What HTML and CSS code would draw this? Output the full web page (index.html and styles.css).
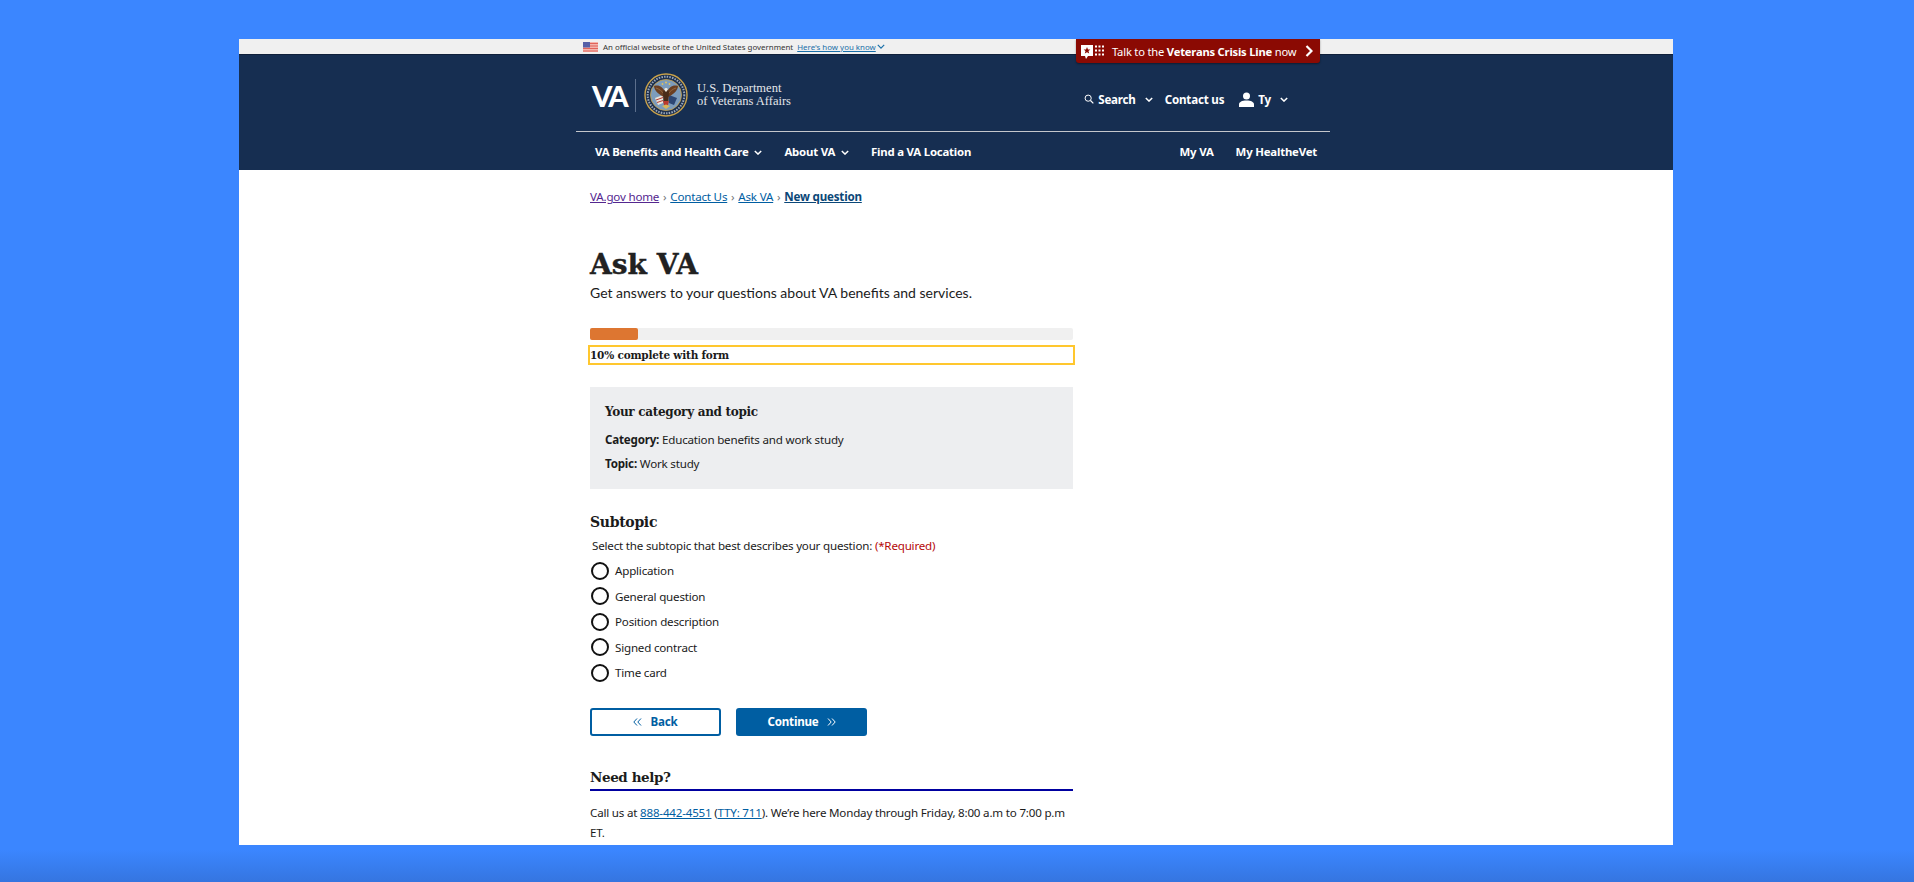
FILE: index.html
```html
<!DOCTYPE html>
<html lang="en">
<head>
    <meta charset="UTF-8">
    <meta name="viewport" content="width=device-width, initial-scale=1.0">
    <title>Ask VA</title>
    <link rel="stylesheet" href="styles.css">
</head>
<body>
    <div class="frame">
        <div class="official-bar">
            <div class="official-inner">
                <svg class="flag" viewBox="0 0 15 10" width="15" height="10">
                    <rect width="15" height="10" fill="#f4b5ad"/>
                    <path d="M0 1.500h15M0 4h15M0 6.500h15M0 9h15" stroke="#e0655a" stroke-width="1"/>
                    <rect width="7" height="5.500" fill="#5560a8"/>
                </svg>
                <span class="official-text">An official website of the United States government</span>
                <a href="#" class="official-link">Here's how you know</a>
                <svg class="official-caret" viewBox="0 0 10 6" width="8" height="5"><path d="M1 1l4 4 4-4" fill="none" stroke="#1a6fa8" stroke-width="1.500"/></svg>
            </div>
        </div>

        <a href="#" class="crisis-btn">
            <svg class="crisis-icon" viewBox="0 0 24 15" width="24" height="15">
                <path d="M1 1h12v11H8l-2 3-1-3H1z" fill="#fff"/>
                <path d="M7 3l1 2.500h2.400L8.500 7l.7 2.600L7 8.200 4.800 9.600 5.500 7 3.600 5.500H6z" fill="#8b0a03"/>
                <path d="M15 1.500h2v2h-2zM18.500 1.500h2v2h-2zM22 1.500h2v2h-2zM15 5.500h2v2h-2zM18.500 5.500h2v2h-2zM22 5.500h2v2h-2zM15 9.500h2v2h-2zM18.500 9.500h2v2h-2zM22 9.500h2v2h-2z" fill="#fff"/>
            </svg>
            <span class="crisis-text">Talk to the <b>Veterans Crisis Line</b> now</span>
            <svg class="crisis-arrow" viewBox="0 0 8 12" width="8" height="12"><path d="M1.500 1l5 5-5 5" fill="none" stroke="#fff" stroke-width="2.200"/></svg>
        </a>

        <header class="site-header">
            <div class="header-inner">
                <div class="logo-row">
                    <div class="logo">
                        <span class="logo-va">VA</span>
                        <span class="logo-divider"></span>
                        <svg class="seal" viewBox="0 0 44 44" width="44" height="44">
                            <circle cx="22" cy="22" r="21" fill="#1d2f4d" stroke="#c9a24a" stroke-width="1.400"/>
                            <circle cx="22" cy="22" r="15.500" fill="#7c9cbc" stroke="#c9a24a" stroke-width="0.800"/>
                            <circle cx="22" cy="22" r="18.300" fill="none" stroke="#9aa8ba" stroke-width="2" stroke-dasharray="1.500 1.200"/>
                            <path d="M11 25l8-3v8l-5 2z" fill="#e9e4da"/>
                            <path d="M12 27l7-2.500M13 29.500l6-2" stroke="#b8392f" stroke-width="1"/>
                            <path d="M33 25l-8-3v8l5 2z" fill="#2d4774"/>
                            <path d="M20 24C16 22 10 18 10 13c5-1.500 9 1 11 6zM24 24c4-2 10-6 10-11-5-1.500-9 1-11 6z" fill="#6b3f22"/>
                            <path d="M12 15c3 1 6 3 8 6M32 15c-3 1-6 3-8 6" stroke="#94683f" stroke-width="1" fill="none"/>
                            <path d="M19 19c1-3 5-3 6 0l-.5 9h-5z" fill="#4a2c18"/>
                            <path d="M20.300 16a2 2 0 013.500 0l-1 2.500h-1.600z" fill="#f0ebe0"/>
                            <path d="M19 28h6l-1.500 6h-3z" fill="#b8392f"/>
                            <path d="M18 33l4-1.500 4 1.500-4 3z" fill="#d9b659"/>
                            <circle cx="22" cy="9.500" r="1" fill="#e2c35f"/><circle cx="18.500" cy="11" r=".9" fill="#e2c35f"/><circle cx="25.500" cy="11" r=".9" fill="#e2c35f"/>
                        </svg>
                        <span class="logo-dept">U.S. Department<br>of Veterans Affairs</span>
                    </div>
                    <nav class="utility-nav">
                        <a href="#" class="util-link util-search">
                            <svg viewBox="0 0 12 12" width="10" height="10"><circle cx="5" cy="5" r="3.700" fill="none" stroke="#fff" stroke-width="1.200"/><path d="M7.800 7.800l3.400 3.400" stroke="#fff" stroke-width="1.400"/></svg>
                            Search
                            <svg class="caret caret-search" viewBox="0 0 10 6" width="8" height="5"><path d="M1 1l4 4 4-4" fill="none" stroke="#fff" stroke-width="1.800"/></svg>
                        </a>
                        <a href="#" class="util-link">Contact us</a>
                        <a href="#" class="util-link util-user">
                            <svg viewBox="0 0 15 15" width="15" height="15"><circle cx="7.500" cy="4" r="3.500" fill="#fff"/><path d="M0 15v-2.500C0 10 3 8.500 7.500 8.500S15 10 15 12.500V15z" fill="#fff"/></svg>
                            Ty
                            <svg class="caret caret-user" viewBox="0 0 10 6" width="8" height="5"><path d="M1 1l4 4 4-4" fill="none" stroke="#fff" stroke-width="1.800"/></svg>
                        </a>
                    </nav>
                </div>
                <nav class="main-nav">
                    <div class="main-nav-left">
                        <a href="#" class="nav-link">VA Benefits and Health Care <svg viewBox="0 0 10 6" width="8" height="5"><path d="M1 1l4 4 4-4" fill="none" stroke="#fff" stroke-width="1.800"/></svg></a>
                        <a href="#" class="nav-link">About VA <svg viewBox="0 0 10 6" width="8" height="5"><path d="M1 1l4 4 4-4" fill="none" stroke="#fff" stroke-width="1.800"/></svg></a>
                        <a href="#" class="nav-link">Find a VA Location</a>
                    </div>
                    <div class="main-nav-right">
                        <a href="#" class="nav-link">My VA</a>
                        <a href="#" class="nav-link">My HealtheVet</a>
                    </div>
                </nav>
            </div>
        </header>

        <main class="content">
            <div class="breadcrumbs">
                <a href="#" class="crumb-visited">VA.gov home</a>
                <span class="crumb-sep">›</span>
                <a href="#">Contact Us</a>
                <span class="crumb-sep">›</span>
                <a href="#">Ask VA</a>
                <span class="crumb-sep">›</span>
                <a href="#" class="crumb-current">New question</a>
            </div>

            <h1>Ask VA</h1>
            <p class="intro">Get answers to your questions about VA benefits and services.</p>

            <div class="progress-track"><div class="progress-fill" style="width: 10%"></div></div>
            <div class="progress-label">10% complete with form</div>

            <section class="topic-box">
                <h3>Your category and topic</h3>
                <p><b>Category:</b> Education benefits and work study</p>
                <p><b>Topic:</b> Work study</p>
            </section>

            <h2 class="subtopic-title">Subtopic</h2>
            <div class="subtopic-hint">Select the subtopic that best describes your question: <span class="required">(*Required)</span></div>

            <div class="radio-list">
                <label class="radio-row"><span class="radio"></span>Application</label>
                <label class="radio-row"><span class="radio"></span>General question</label>
                <label class="radio-row"><span class="radio"></span>Position description</label>
                <label class="radio-row"><span class="radio"></span>Signed contract</label>
                <label class="radio-row"><span class="radio"></span>Time card</label>
            </div>

            <div class="form-buttons">
                <button class="btn btn-back">
                    <svg viewBox="0 0 9 8" width="9" height="8"><path d="M4 .5L.8 4 4 7.500M8 .5L4.800 4 8 7.500" fill="none" stroke="#005ea2" stroke-width="1"/></svg>
                    Back
                </button>
                <button class="btn btn-continue">
                    Continue
                    <svg viewBox="0 0 9 8" width="9" height="8"><path d="M1 .5L4.200 4 1 7.500M5 .5L8.200 4 5 7.500" fill="none" stroke="#fff" stroke-width="1"/></svg>
                </button>
            </div>

            <h2 class="help-title">Need help?</h2>
            <p class="help-text">Call us at <a href="#">888-442-4551</a> (<a href="#">TTY: 711</a>). We’re here Monday through Friday, 8:00 a.m to 7:00 p.m ET.</p>
        </main>
    </div>
</body>
</html>
```

FILE: styles.css
```css
html, body {
    height: 100%;
    margin: 0;
}

body {
    background: linear-gradient(#3b86ff 0, #3b86ff 850px, #3575e0 882px);
    font-family: "Noto Sans", sans-serif;
    color: #1b1b1b;
    overflow: hidden;
}

a {
    color: #005ea2;
}

.frame {
    position: relative;
    width: 1434px;
    height: 806px;
    margin: 39px 0 0 239px;
    background-color: #ffffff;
    overflow: hidden;
}

.official-bar {
    height: 15px;
    background-color: #f0f0f0;
}

.official-inner {
    display: flex;
    align-items: center;
    height: 15px;
    padding-left: 344px;
    font-size: 7.900px;
}

.flag {
    margin-right: 5px;
}

.official-text {
    color: #333;
    margin-right: 4px;
}

.official-link {
    color: #1a6fa8;
    margin-right: 1px;
}

.crisis-btn {
    position: absolute;
    top: 0;
    left: 837px;
    width: 244px;
    height: 24px;
    box-sizing: border-box;
    padding: 0 7px 0 4px;
    display: flex;
    align-items: center;
    background-color: #8b0a03;
    border-radius: 0 0 3px 3px;
    box-shadow: 0 1px 2px rgba(0, 0, 0, 0.4);
    color: #fff;
    text-decoration: none;
    font-size: 11.200px;
    letter-spacing: -0.200px;
    white-space: nowrap;
}

.crisis-text {
    margin-left: 8px;
    flex: 1;
}

.site-header {
    height: 116px;
    background-color: #162e51;
    border-top: 1px solid #10203a;
    box-sizing: border-box;
}

.header-inner {
    width: 754px;
    margin-left: 337px;
}

.logo-row {
    display: flex;
    justify-content: space-between;
    align-items: center;
    height: 76px;
    border-bottom: 1.500px solid #c4c7cc;
    padding: 0 42px 0 15px;
}

.logo {
    display: flex;
    align-items: center;
    margin-top: 4px;
}

.logo-va {
    font-family: "Lato", sans-serif;
    font-weight: 900;
    font-size: 29px;
    letter-spacing: -2.500px;
    color: #fff;
    width: 36px;
    padding-left: 1px;
    margin-right: -1px;
}

.logo-divider {
    width: 1px;
    height: 33px;
    background-color: #5c6f8c;
    margin: 0 8px 0 8px;
}

.logo-dept {
    font-family: "Liberation Serif", serif;
    font-size: 12.500px;
    line-height: 13px;
    color: #e4e6ea;
    margin-left: 9px;
}

.utility-nav {
    display: flex;
    align-items: center;
    margin-top: 12px;
    font-size: 11.600px;
    font-weight: 700;
    letter-spacing: -0.200px;
}

.util-link {
    display: flex;
    align-items: center;
    color: #fff;
    text-decoration: none;
}

.util-search svg:first-child {
    margin-right: 4px;
}

.caret-search {
    margin: 0 12px 0 9px;
}

.util-user {
    margin-left: 15px;
}

.util-user svg:first-child {
    margin-right: 4px;
}

.caret-user {
    margin: 0 0 0 9px;
}

.main-nav {
    display: flex;
    justify-content: space-between;
    align-items: center;
    height: 38px;
    padding: 0 13px 0 19px;
    box-sizing: border-box;
    font-size: 11.400px;
    font-weight: 700;
    letter-spacing: -0.200px;
}

.main-nav-left, .main-nav-right {
    display: flex;
    gap: 22px;
}

.nav-link {
    color: #fff;
    text-decoration: none;
}

.nav-link svg {
    margin-left: 3px;
    vertical-align: 1px;
}

.content {
    width: 483px;
    margin-left: 351px;
    font-size: 11.600px;
    letter-spacing: -0.200px;
}

.breadcrumbs {
    margin-top: 19px;
    height: 16px;
    line-height: 16px;
}

.crumb-visited {
    color: #54278f;
}

.crumb-sep {
    color: #71767a;
    margin: 0 1px;
}

.crumb-current {
    font-weight: 700;
    color: #0b4778;
}

h1 {
    font-family: "DejaVu Serif", serif;
    font-weight: 700;
    font-size: 28px;
    line-height: 34px;
    color: #212121;
    margin: 43px 0 0;
    letter-spacing: 0;
    -webkit-text-stroke: 0.400px #212121;
}

.intro {
    font-family: "Lato", sans-serif;
    font-size: 14px;
    line-height: 20px;
    margin: 1px 0 0;
    letter-spacing: 0;
}

.progress-track {
    height: 12px;
    margin-top: 25px;
    background-color: #f0f0f0;
    border-radius: 2px;
}

.progress-fill {
    height: 100%;
    background-color: #dd7631;
    border-radius: 2px;
}

.progress-label {
    font-family: "DejaVu Serif", serif;
    font-weight: 700;
    font-size: 10.500px;
    letter-spacing: -0.200px;
    height: 16px;
    line-height: 16px;
    margin: 5px -2px 0 -2px;
    border: 2px solid #ffc72e;
}

.topic-box {
    margin-top: 22px;
    height: 102px;
    box-sizing: border-box;
    padding: 15px 15px;
    background-color: #edeef0;
}

.topic-box h3 {
    font-family: "DejaVu Serif", serif;
    font-size: 12px;
    letter-spacing: -0.300px;
    line-height: 20px;
    margin: 0 0 9px;
}

.topic-box p {
    margin: 0 0 6px;
    line-height: 18px;
}

.subtopic-title {
    font-family: "DejaVu Serif", serif;
    font-size: 14px;
    letter-spacing: -0.300px;
    line-height: 20px;
    margin: 23px 0 0;
}

.subtopic-hint {
    margin: 5px 0 0 2px;
    line-height: 18px;
}

.required {
    color: #b50909;
}

.radio-list {
    display: flex;
    flex-direction: column;
    margin-top: 3px;
}

.radio-row {
    display: flex;
    align-items: center;
    height: 25.500px;
    gap: 6px;
}

.radio {
    width: 14px;
    height: 14px;
    border: 2px solid #111;
    border-radius: 50%;
    margin-left: 1px;
    background-color: #fff;
}

.form-buttons {
    display: flex;
    gap: 15px;
    margin-top: 22px;
}

.btn {
    display: flex;
    align-items: center;
    justify-content: center;
    gap: 8px;
    width: 131px;
    height: 28px;
    padding: 0;
    border-radius: 3px;
    font-family: "Noto Sans", sans-serif;
    font-size: 11.600px;
    letter-spacing: -0.200px;
    font-weight: 700;
}

.btn-back {
    background-color: #fff;
    color: #005ea2;
    border: 2px solid #005ea2;
}

.btn-continue {
    background-color: #005ea2;
    color: #fff;
    border: none;
}

.help-title {
    font-family: "DejaVu Serif", serif;
    font-size: 13.500px;
    letter-spacing: -0.400px;
    line-height: 20px;
    margin: 31px 0 0;
    padding-bottom: 2px;
    border-bottom: 2px solid #0000a0;
}

.help-text {
    margin: 12px 0 0;
    line-height: 20px;
}
```
